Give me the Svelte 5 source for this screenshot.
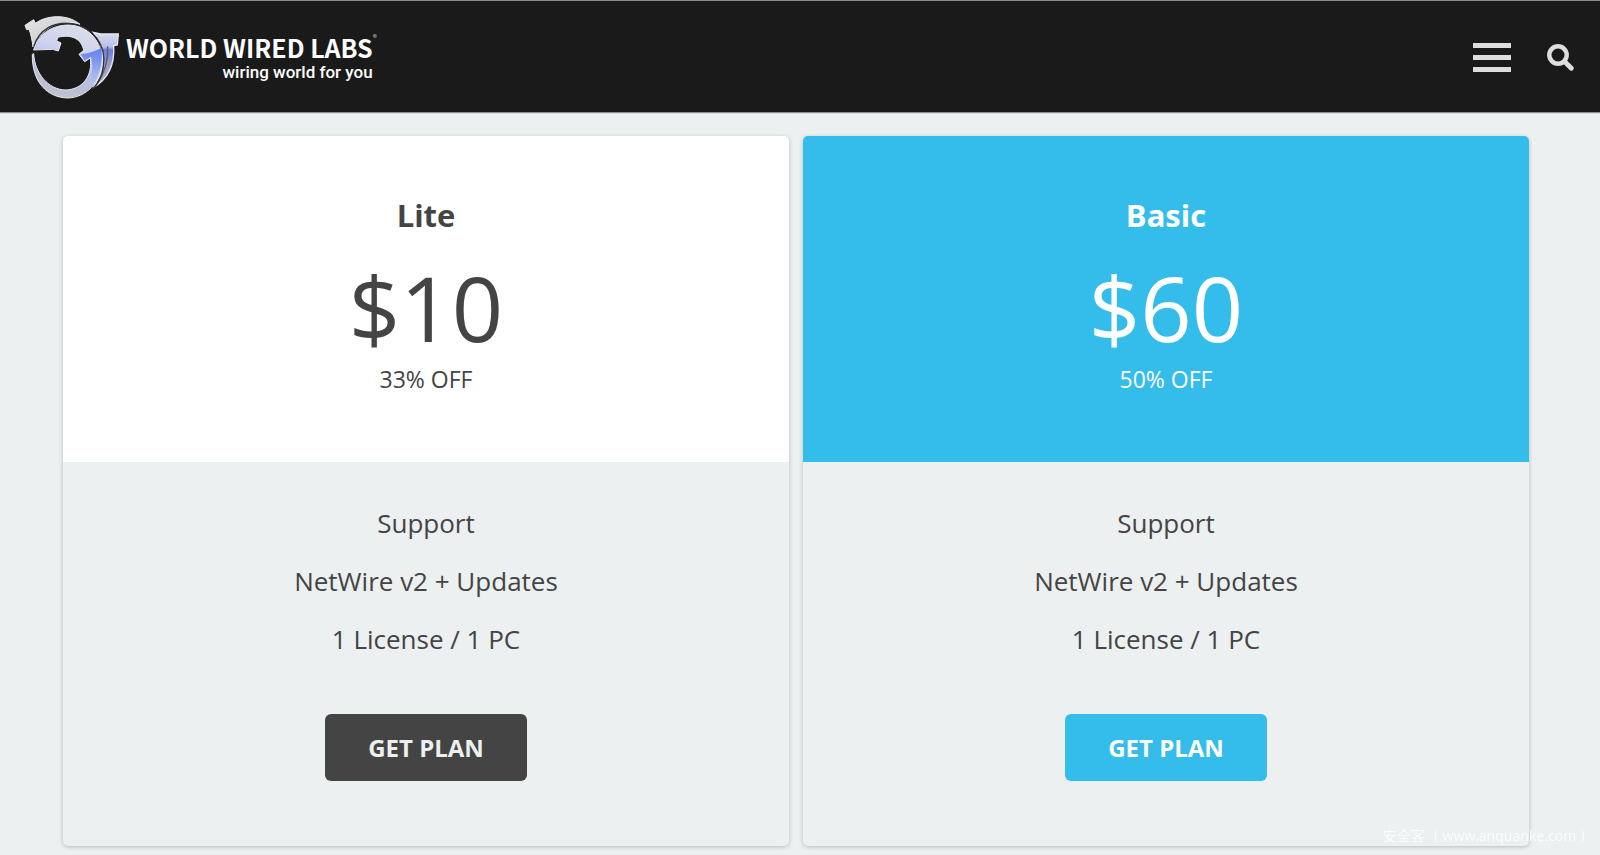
<script>
    const plans = [
        { name: "Lite", price: "$10", off: "33% OFF", featured: false },
        { name: "Basic", price: "$60", off: "50% OFF", featured: true }
    ];

    const features = ["Support", "NetWire v2 + Updates", "1 License / 1 PC"];
</script>

<header class="header">
    <a class="logo" href="/" aria-label="World Wired Labs">
        <svg class="emblem" viewBox="60 30 312 273" aria-hidden="true">
            <defs>
                <linearGradient id="silver" x1="0" y1="0" x2="1" y2="1">
                    <stop offset="0" stop-color="#e6e6e8" />
                    <stop offset="0.5" stop-color="#d2d2d6" />
                    <stop offset="1" stop-color="#b4b5bf" />
                </linearGradient>
                <linearGradient id="ring" x1="0.7" y1="0" x2="0.4" y2="1">
                    <stop offset="0" stop-color="#dcdee8" />
                    <stop offset="0.35" stop-color="#ced3ee" />
                    <stop offset="0.6" stop-color="#b3bff0" />
                    <stop offset="0.82" stop-color="#b9bed6" />
                    <stop offset="1" stop-color="#c2c3cc" />
                </linearGradient>
                <linearGradient id="blue" x1="0" y1="0" x2="0" y2="1">
                    <stop offset="0" stop-color="#5f80f2" />
                    <stop offset="0.5" stop-color="#91a5f4" />
                    <stop offset="1" stop-color="#c3cbf3" stop-opacity="0.4" />
                </linearGradient>
                <linearGradient id="wing" x1="0" y1="0" x2="0" y2="1">
                    <stop offset="0" stop-color="#dcdeea" />
                    <stop offset="0.26" stop-color="#b6bfe8" />
                    <stop offset="0.32" stop-color="#6a80d6" />
                    <stop offset="0.6" stop-color="#9ca3c4" />
                    <stop offset="1" stop-color="#a9aab2" />
                </linearGradient>
            </defs>
            <path d="M75 73 L101 56 L106 67 C138 43 200 37 240 70 C184 52 127 76 99 138 C97 119 93 101 87 84 L80 86 Z" fill="url(#silver)" stroke="#f0f0f2" stroke-width="3" />
            <path d="M280 94 L302 99 H355 L352 132 L341 134 C344 183 328 232 279 260 C312 215 324 144 280 94 Z" fill="url(#wing)" stroke="#e8e9ee" stroke-width="4" />
            <path d="M323 136 C325 175 314 216 292 246" fill="none" stroke="#555b72" stroke-width="4" />
            <path d="M101 147 C113 100 156 71 209 72 C266 75 308 123 306 181 C303 245 258 290 203 291 C142 290 95 243 97 160 L101 158 C104 217 145 266 197 267 C249 265 278 224 271 171 L254 182 L237 160 L251 148 C245 116 217 98 173 109 L170 120 L183 126 L175 150 L158 145 Z" fill="url(#ring)" stroke="#e9e9ee" stroke-width="3" stroke-linejoin="round" />
            <path d="M242 160 C268 156 290 149 303 141 C312 190 296 235 256 262 C276 238 282 204 273 167 L254 179 Z" fill="url(#blue)" />
            <path d="M101 137 C118 84 163 61 215 68 C281 78 320 134 310 196 C307 225 294 248 277 265" fill="none" stroke="#303138" stroke-width="4" />
        </svg>
        <span class="wordmark">
            <span class="company">WORLD WIRED LABS<sup>®</sup></span>
            <span class="tagline">wiring world for you</span>
        </span>
    </a>
    <nav class="tools">
        <button class="menu" aria-label="Menu">
            <span></span>
            <span></span>
            <span></span>
        </button>
        <button class="search" aria-label="Search">
            <svg viewBox="0 0 27 27" aria-hidden="true">
                <circle cx="11" cy="11" r="8.7" fill="none" stroke="#dedede" stroke-width="4.4" />
                <path d="M17.5 17.5 L24.3 24.3" stroke="#dedede" stroke-width="4.8" stroke-linecap="round" />
            </svg>
        </button>
    </nav>
</header>

<main class="plans">
    {#each plans as plan}
        <section class="card" class:featured={plan.featured}>
            <div class="top">
                <h2>{plan.name}</h2>
                <p class="price">{plan.price}</p>
                <p class="off">{plan.off}</p>
            </div>
            <ul>
                {#each features as feature}
                    <li>{feature}</li>
                {/each}
            </ul>
            <button class="get">GET PLAN</button>
        </section>
    {/each}
</main>

<p class="watermark">安全客（ www.anquanke.com ）</p>

<style>
    :global(body) {
        margin: 0;
        background-color: #ecf0f1;
        color: #444;
        font-family: "Open Sans", sans-serif;
    }

    .header {
        display: flex;
        justify-content: space-between;
        align-items: center;
        box-sizing: border-box;
        height: 112px;
        padding: 0 26px 0 20px;
        background-color: #1a1a1a;
        border-top: 1px solid #8a8a8a;
        box-shadow: 0 1px 1px rgba(0, 0, 0, 0.4);
    }

    .logo {
        display: flex;
        align-items: center;
        gap: 2px;
        color: #fff;
        text-decoration: none;
    }

    .emblem {
        width: 104px;
        height: 91px;
    }

    .wordmark {
        display: flex;
        flex-direction: column;
        align-items: flex-end;
    }

    .company {
        position: relative;
        font-family: "Noto Sans CJK SC", "Liberation Sans", sans-serif;
        font-size: 25px;
        font-weight: bold;
        line-height: 30px;
        white-space: nowrap;
    }

    .company sup {
        position: absolute;
        left: 100%;
        top: 2px;
        font-size: 8px;
        line-height: 8px;
        color: #aaa;
    }

    .tagline {
        font-family: Roboto, sans-serif;
        font-size: 17px;
        font-weight: 500;
        line-height: 20px;
    }

    .tools {
        display: flex;
        align-items: center;
        gap: 36px;
        padding-top: 2px;
    }

    button {
        border: none;
        padding: 0;
        background: none;
        font-family: inherit;
        cursor: pointer;
    }

    .menu {
        display: flex;
        flex-direction: column;
        gap: 7px;
        width: 38px;
    }

    .menu span {
        height: 5px;
        width: 100%;
        background-color: #dedede;
    }

    .search svg {
        display: block;
        width: 27px;
        height: 27px;
    }

    .plans {
        display: grid;
        grid-template-columns: 1fr 1fr;
        gap: 14px;
        padding: 24px 71px 9px 63px;
    }

    .card {
        display: flex;
        flex-direction: column;
        align-items: center;
        padding-bottom: 65px;
        border-radius: 5px;
        overflow: hidden;
        text-align: center;
        box-shadow: 0 1px 4px rgba(0, 0, 0, 0.22);
    }

    .top {
        box-sizing: border-box;
        width: 100%;
        padding: 57px 0 65px;
        background-color: #fff;
    }

    .featured .top {
        background-color: #34bdeb;
        color: #fff;
    }

    h2 {
        margin: 0 0 16px;
        font-size: 31px;
        line-height: 44px;
    }

    .price {
        margin: 0;
        font-size: 90px;
        line-height: 108px;
    }

    .off {
        margin: 0;
        font-size: 23px;
        line-height: 36px;
    }

    ul {
        margin: 32px 0 46px;
        padding: 0;
        list-style: none;
    }

    li {
        font-size: 26px;
        line-height: 58px;
    }

    .get {
        padding: 0 43px;
        border-radius: 6px;
        background-color: #444;
        color: #ecf0f1;
        font-size: 24px;
        font-weight: bold;
        line-height: 67px;
    }

    .featured .get {
        background-color: #34bdeb;
        color: #fff;
    }

    .watermark {
        position: fixed;
        right: 6px;
        bottom: 9px;
        margin: 0;
        color: rgba(255, 255, 255, 0.8);
        font-family: "Noto Sans", "Noto Sans CJK SC", sans-serif;
        font-size: 14px;
        line-height: 20px;
    }
</style>
